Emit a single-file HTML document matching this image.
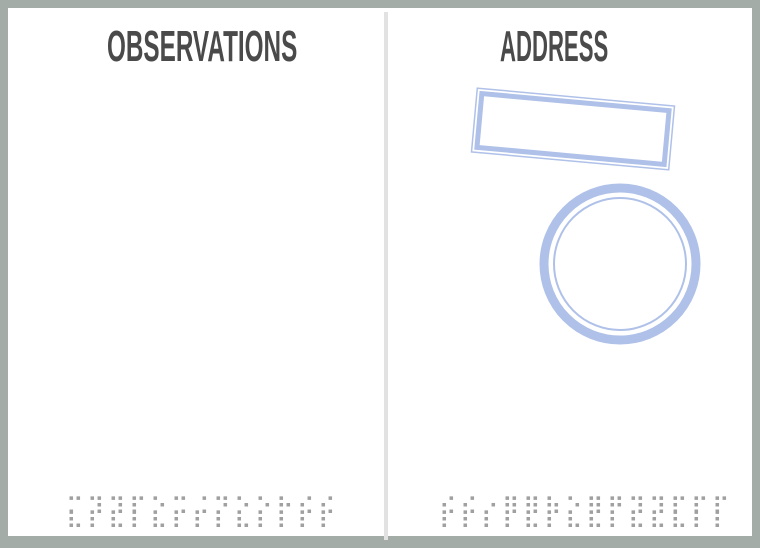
<!DOCTYPE html>
<html><head><meta charset="utf-8"><style>
html,body{margin:0;padding:0}
body{width:760px;height:548px;background:#a3aca7;position:relative;overflow:hidden;font-family:"Liberation Sans",sans-serif}
.page{position:absolute;left:8px;top:8px;width:744px;height:528px;background:#fff}
.div{position:absolute;left:384px;top:12px;width:4px;height:528px;background:#e2e2e2}
.t{position:absolute;top:22px;font-size:44px;font-weight:bold;color:#4a4a4a;white-space:nowrap;transform-origin:0 0}
.br{position:absolute;display:flex;color:#a0a0a0;font-family:"DejaVu Sans",sans-serif;font-size:24px;line-height:14px}
.br span{display:block;width:21px;text-align:left}
</style></head><body>
<div class="page"></div>
<div class="div"></div>
<div class="t" style="left:107px;transform:scaleX(0.552)">OBSERVATIONS</div>
<div class="t" style="left:500px;transform:scaleX(0.503)">ADDRESS</div>
<svg style="position:absolute;left:0;top:0" width="760" height="548">
<g transform="rotate(5.2 573 129)" fill="none" stroke="#afc1e8">
<rect x="474" y="97" width="198" height="64" stroke-width="1.5"/>
<rect x="479" y="102" width="188" height="54" stroke-width="5"/>
</g>
<circle cx="620" cy="264" r="76" fill="none" stroke="#afc1e8" stroke-width="9"/>
<circle cx="620" cy="264" r="66" fill="none" stroke="#afc1e8" stroke-width="2"/>
</svg>
<div class="br" style="left:66px;top:500px"><span>⠍</span><span>⠹</span><span>⠹</span><span>⠏</span><span>⠑</span><span>⠩</span><span>⠨</span><span>⠙</span><span>⠑</span><span>⠑</span><span>⠓</span><span>⠪</span><span>⠪</span></div>
<div class="br" style="left:66px;top:514px"><span>⠧</span><span>⠇</span><span>⠧</span><span>⠇</span><span>⠧</span><span>⠇</span><span>⠇</span><span>⠇</span><span>⠧</span><span>⠇</span><span>⠇</span><span>⠇</span><span>⠇</span></div>
<div class="br" style="left:439px;top:500px"><span>⠪</span><span>⠪</span><span>⠐</span><span>⠻</span><span>⠻</span><span>⠳</span><span>⠑</span><span>⠻</span><span>⠛</span><span>⠹</span><span>⠹</span><span>⠏</span><span>⠏</span><span>⠏</span></div>
<div class="br" style="left:439px;top:514px"><span>⠇</span><span>⠇</span><span>⠇</span><span>⠇</span><span>⠧</span><span>⠇</span><span>⠧</span><span>⠧</span><span>⠇</span><span>⠧</span><span>⠧</span><span>⠧</span><span>⠇</span><span>⠇</span></div>
</body></html>
